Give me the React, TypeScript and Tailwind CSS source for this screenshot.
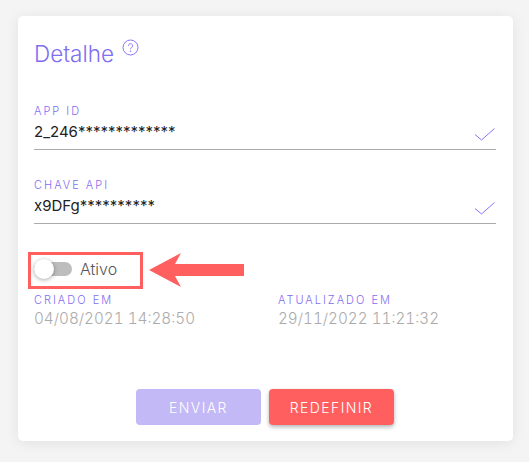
import React from "react";

function Check() {
  return (
    <svg width="22" height="14" viewBox="0 0 22 14" className="absolute right-0 top-[24px]" fill="none" stroke="#8a75fb" strokeWidth="1">
      <path d="M1 6.5 L7.5 12 L20.5 0.5" />
    </svg>
  );
}

function Field({ label, value }: { label: string; value: string }) {
  return (
    <div className="relative h-[46px] border-b border-[#ababab]">
      <div className="text-[11px] leading-[13px] tracking-[2px] font-light text-[#7f6df2] pt-[1px]">{label}</div>
      <div className="text-[15px] leading-[20px] text-[#222222] mt-[4px]">{value}</div>
      <Check />
    </div>
  );
}

function Stamp({ label, value, width }: { label: string; value: string; width: string }) {
  return (
    <div className={width}>
      <div className="text-[11px] leading-[13px] tracking-[2px] font-light text-[#7f6df2]">{label}</div>
      <div className="text-[15.25px] leading-[20px] font-light tabular-nums text-[#ababab] mt-[2px]">{value}</div>
    </div>
  );
}

export default function App() {
  return (
    <div className="w-[529px] h-[462px] bg-[#f4f4f4] pt-[16px] pl-[18px] font-['Inter',sans-serif] overflow-hidden">
      <div className="relative w-[495px] h-[425px] bg-white rounded-[5px] shadow-[0_2px_14px_rgba(0,0,0,0.08)] px-[16px] pt-[24px]">
        <div className="flex items-start h-[28px]">
          <span className="text-[22.5px] leading-[28px] font-light text-[#7f6df2]">Detalhe</span>
          <svg width="17" height="17" viewBox="0 0 17 17" fill="none" stroke="#8a75fb" strokeWidth="1" className="ml-[8px] mt-[-1px]">
            <circle cx="8.5" cy="8.5" r="7.5" />
            <path d="M6.4 6.8 a2.1 2.1 0 1 1 3.2 1.8 c-.7.4-1.1.8-1.1 1.6" />
            <circle cx="8.5" cy="12.2" r="0.4" />
          </svg>
        </div>

        <div className="flex flex-col gap-[28px] mt-[36px] w-[462px]">
          <Field label="APP ID" value="2_246*************" />
          <Field label="CHAVE API" value="x9DFg**********" />
        </div>

        <div className="flex items-center h-[37px] mt-[26px]">
          <div className="relative w-[38px] h-[14px] bg-[#bdbdbd] rounded-full">
            <div className="absolute left-0 top-[-3px] w-[20px] h-[20px] bg-white rounded-full shadow-[0_1px_4px_rgba(0,0,0,0.35)]" />
          </div>
          <span className="ml-[8px] text-[16px] font-light text-[#555555]">Ativo</span>
        </div>

        <div className="flex mt-[7px]">
          <Stamp label="CRIADO EM" value="04/08/2021 14:28:50" width="w-[244px]" />
          <Stamp label="ATUALIZADO EM" value="29/11/2022 11:21:32" width="w-[218px]" />
        </div>

        <div className="flex justify-center gap-[8px] mt-[60px] mr-[1px]">
          <button className="w-[125px] h-[36px] rounded-[4px] bg-[#c3b9f6] text-white text-[14px] font-light tracking-[1.4px]">ENVIAR</button>
          <button className="w-[125px] h-[36px] rounded-[4px] bg-[#ff5f5f] text-white text-[14px] font-light tracking-[1.4px] shadow-[0_2px_4px_rgba(0,0,0,0.3)]">REDEFINIR</button>
        </div>

        <div className="absolute left-[10px] top-[236px] w-[115px] h-[37px] border-[3px] border-[#ff5f5f]" />
        <svg width="96" height="34" viewBox="0 0 96 34" className="absolute left-[131px] top-[237px]" fill="#ff5f5f">
          <path d="M0 17 L32 0 L26 11 L95 11 L95 23 L26 23 L32 34 Z" />
        </svg>
      </div>
    </div>
  );
}
